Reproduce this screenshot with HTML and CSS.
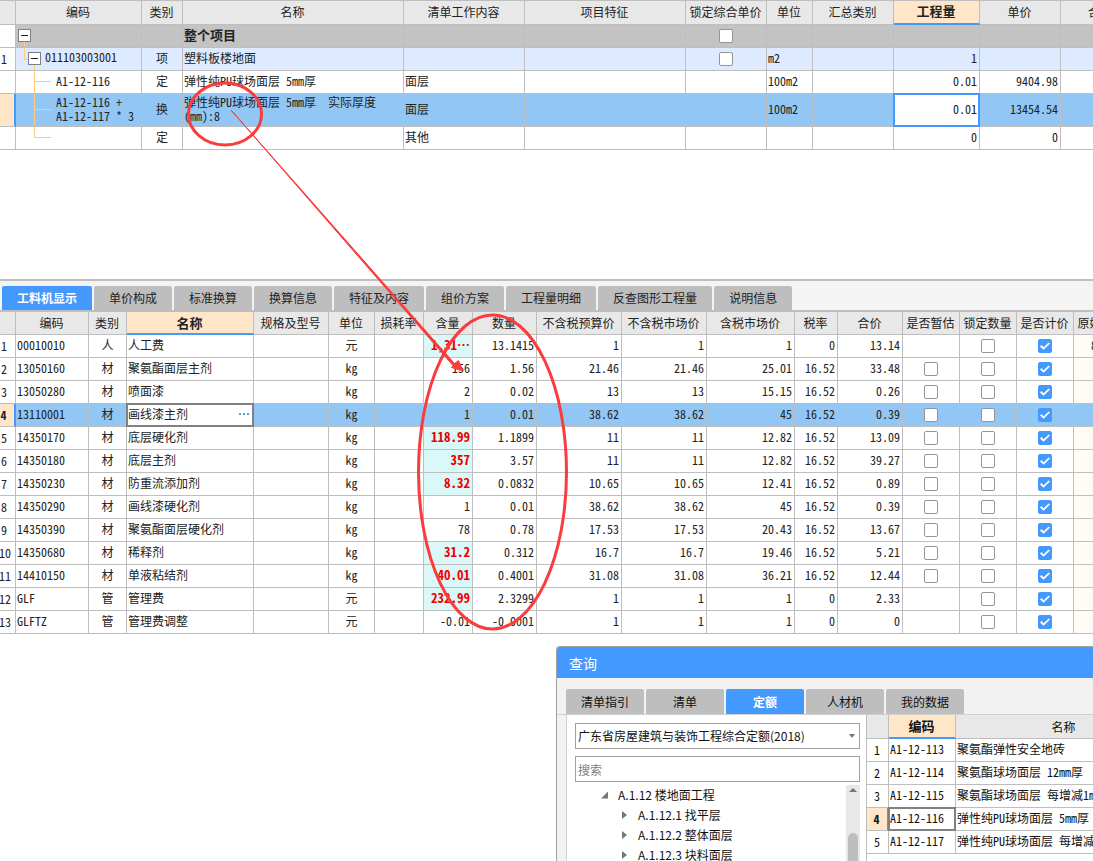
FILE: index.html
```html
<!DOCTYPE html>
<html lang="zh-CN">
<head>
<meta charset="utf-8">
<title>工料机显示</title>
<link rel="stylesheet" href="styles.css">
</head>
<body>
<main class="workspace">
  <section class="bill">
    <table class="grid bill-grid">
      <colgroup><col class="w16"><col class="w126"><col class="w41"><col class="w221"><col class="w121"><col class="w161"><col class="w81"><col class="w46"><col class="w81"><col class="w86"><col class="w81"><col></colgroup>
      <thead>
        <tr><th></th><th>编码</th><th>类别</th><th>名称</th><th>清单工作内容</th><th>项目特征</th><th>锁定综合单价</th><th>单位</th><th>汇总类别</th><th class="current">工程量</th><th>单价</th><th>合价</th></tr>
      </thead>
      <tbody>
        <tr class="group"><td class="no"></td><td class="tree root"><button class="toggle" aria-label="折叠"></button></td><td></td><td class="title">整个项目</td><td></td><td></td><td class="check"><input type="checkbox" aria-label="锁定综合单价"></td><td></td><td></td><td></td><td></td><td></td></tr>
        <tr class="item"><td class="no">1</td><td class="tree node"><button class="toggle" aria-label="折叠"></button>011103003001</td><td class="mid">项</td><td>塑料板楼地面</td><td></td><td></td><td class="check"><input type="checkbox" aria-label="锁定综合单价"></td><td>m2</td><td></td><td class="num">1</td><td></td><td></td></tr>
        <tr><td class="no"></td><td class="tree leaf">A1-12-116</td><td class="mid">定</td><td>弹性纯PU球场面层 5mm厚</td><td>面层</td><td></td><td></td><td>100m2</td><td></td><td class="num">0.01</td><td class="num">9404.98</td><td></td></tr>
        <tr class="selected tall"><td class="no"></td><td class="tree leaf">A1-12-116 +<br>A1-12-117 * 3</td><td class="mid">换</td><td>弹性纯PU球场面层 5mm厚&nbsp; 实际厚度<br>(mm):8</td><td>面层</td><td></td><td></td><td>100m2</td><td></td><td class="editing"><input class="field num" type="text" value="0.01" aria-label="工程量"></td><td class="num">13454.54</td><td></td></tr>
        <tr><td class="no"></td><td class="tree leaf last"></td><td class="mid">定</td><td></td><td>其他</td><td></td><td></td><td></td><td></td><td class="num">0</td><td class="num">0</td><td></td></tr>
      </tbody>
    </table>
  </section>

  <section class="detail">
    <nav class="tabs">
      <button class="tab active">工料机显示</button><button class="tab">单价构成</button><button class="tab">标准换算</button><button class="tab">换算信息</button><button class="tab">特征及内容</button><button class="tab">组价方案</button><button class="tab">工程量明细</button><button class="tab">反查图形工程量</button><button class="tab">说明信息</button>
    </nav>
    <table class="grid detail-grid">
      <colgroup><col class="w16"><col class="w73"><col class="w38"><col class="w127"><col class="w75"><col class="w46"><col class="w49"><col class="w49"><col class="w64"><col class="w85"><col class="w85"><col class="w88"><col class="w43"><col class="w65"><col class="w57"><col class="w57"><col class="w57"><col></colgroup>
      <thead>
        <tr><th></th><th>编码</th><th>类别</th><th class="current">名称</th><th>规格及型号</th><th>单位</th><th>损耗率</th><th>含量</th><th>数量</th><th>不含税预算价</th><th>不含税市场价</th><th>含税市场价</th><th>税率</th><th>合价</th><th>是否暂估</th><th>锁定数量</th><th>是否计价</th><th>原始含量</th></tr>
      </thead>
      <tbody>
        <tr><td class="no">1</td><td>00010010</td><td class="mid">人</td><td>人工费</td><td></td><td class="mid">元</td><td></td><td class="num changed">1,31⋯</td><td class="num">13.1415</td><td class="num">1</td><td class="num">1</td><td class="num">1</td><td class="num">0</td><td class="num">13.14</td><td></td><td class="check"><input type="checkbox" aria-label="锁定数量"></td><td class="check"><input type="checkbox" checked aria-label="是否计价"></td><td class="origin">8</td></tr>
        <tr><td class="no">2</td><td>13050160</td><td class="mid">材</td><td>聚氨酯面层主剂</td><td></td><td class="mid">kg</td><td></td><td class="num">156</td><td class="num">1.56</td><td class="num">21.46</td><td class="num">21.46</td><td class="num">25.01</td><td class="num">16.52</td><td class="num">33.48</td><td class="check"><input type="checkbox" aria-label="是否暂估"></td><td class="check"><input type="checkbox" aria-label="锁定数量"></td><td class="check"><input type="checkbox" checked aria-label="是否计价"></td><td class="origin"></td></tr>
        <tr><td class="no">3</td><td>13050280</td><td class="mid">材</td><td>喷面漆</td><td></td><td class="mid">kg</td><td></td><td class="num">2</td><td class="num">0.02</td><td class="num">13</td><td class="num">13</td><td class="num">15.15</td><td class="num">16.52</td><td class="num">0.26</td><td class="check"><input type="checkbox" aria-label="是否暂估"></td><td class="check"><input type="checkbox" aria-label="锁定数量"></td><td class="check"><input type="checkbox" checked aria-label="是否计价"></td><td class="origin"></td></tr>
        <tr class="selected"><td class="no">4</td><td>13110001</td><td class="mid">材</td><td class="picking"><div class="picker"><input class="field" type="text" value="画线漆主剂" aria-label="名称"><button class="more" aria-label="更多"><i></i><i></i><i></i></button></div></td><td></td><td class="mid">kg</td><td></td><td class="num">1</td><td class="num">0.01</td><td class="num">38.62</td><td class="num">38.62</td><td class="num">45</td><td class="num">16.52</td><td class="num">0.39</td><td class="check"><input type="checkbox" aria-label="是否暂估"></td><td class="check"><input type="checkbox" aria-label="锁定数量"></td><td class="check"><input type="checkbox" checked aria-label="是否计价"></td><td></td></tr>
        <tr><td class="no">5</td><td>14350170</td><td class="mid">材</td><td>底层硬化剂</td><td></td><td class="mid">kg</td><td></td><td class="num changed">118.99</td><td class="num">1.1899</td><td class="num">11</td><td class="num">11</td><td class="num">12.82</td><td class="num">16.52</td><td class="num">13.09</td><td class="check"><input type="checkbox" aria-label="是否暂估"></td><td class="check"><input type="checkbox" aria-label="锁定数量"></td><td class="check"><input type="checkbox" checked aria-label="是否计价"></td><td class="origin"></td></tr>
        <tr><td class="no">6</td><td>14350180</td><td class="mid">材</td><td>底层主剂</td><td></td><td class="mid">kg</td><td></td><td class="num changed">357</td><td class="num">3.57</td><td class="num">11</td><td class="num">11</td><td class="num">12.82</td><td class="num">16.52</td><td class="num">39.27</td><td class="check"><input type="checkbox" aria-label="是否暂估"></td><td class="check"><input type="checkbox" aria-label="锁定数量"></td><td class="check"><input type="checkbox" checked aria-label="是否计价"></td><td class="origin"></td></tr>
        <tr><td class="no">7</td><td>14350230</td><td class="mid">材</td><td>防重流添加剂</td><td></td><td class="mid">kg</td><td></td><td class="num changed">8.32</td><td class="num">0.0832</td><td class="num">10.65</td><td class="num">10.65</td><td class="num">12.41</td><td class="num">16.52</td><td class="num">0.89</td><td class="check"><input type="checkbox" aria-label="是否暂估"></td><td class="check"><input type="checkbox" aria-label="锁定数量"></td><td class="check"><input type="checkbox" checked aria-label="是否计价"></td><td class="origin"></td></tr>
        <tr><td class="no">8</td><td>14350290</td><td class="mid">材</td><td>画线漆硬化剂</td><td></td><td class="mid">kg</td><td></td><td class="num">1</td><td class="num">0.01</td><td class="num">38.62</td><td class="num">38.62</td><td class="num">45</td><td class="num">16.52</td><td class="num">0.39</td><td class="check"><input type="checkbox" aria-label="是否暂估"></td><td class="check"><input type="checkbox" aria-label="锁定数量"></td><td class="check"><input type="checkbox" checked aria-label="是否计价"></td><td class="origin"></td></tr>
        <tr><td class="no">9</td><td>14350390</td><td class="mid">材</td><td>聚氨酯面层硬化剂</td><td></td><td class="mid">kg</td><td></td><td class="num">78</td><td class="num">0.78</td><td class="num">17.53</td><td class="num">17.53</td><td class="num">20.43</td><td class="num">16.52</td><td class="num">13.67</td><td class="check"><input type="checkbox" aria-label="是否暂估"></td><td class="check"><input type="checkbox" aria-label="锁定数量"></td><td class="check"><input type="checkbox" checked aria-label="是否计价"></td><td class="origin"></td></tr>
        <tr><td class="no">10</td><td>14350680</td><td class="mid">材</td><td>稀释剂</td><td></td><td class="mid">kg</td><td></td><td class="num changed">31.2</td><td class="num">0.312</td><td class="num">16.7</td><td class="num">16.7</td><td class="num">19.46</td><td class="num">16.52</td><td class="num">5.21</td><td class="check"><input type="checkbox" aria-label="是否暂估"></td><td class="check"><input type="checkbox" aria-label="锁定数量"></td><td class="check"><input type="checkbox" checked aria-label="是否计价"></td><td class="origin"></td></tr>
        <tr><td class="no">11</td><td>14410150</td><td class="mid">材</td><td>单液粘结剂</td><td></td><td class="mid">kg</td><td></td><td class="num changed">40.01</td><td class="num">0.4001</td><td class="num">31.08</td><td class="num">31.08</td><td class="num">36.21</td><td class="num">16.52</td><td class="num">12.44</td><td class="check"><input type="checkbox" aria-label="是否暂估"></td><td class="check"><input type="checkbox" aria-label="锁定数量"></td><td class="check"><input type="checkbox" checked aria-label="是否计价"></td><td class="origin"></td></tr>
        <tr><td class="no">12</td><td>GLF</td><td class="mid">管</td><td>管理费</td><td></td><td class="mid">元</td><td></td><td class="num changed">232.99</td><td class="num">2.3299</td><td class="num">1</td><td class="num">1</td><td class="num">1</td><td class="num">0</td><td class="num">2.33</td><td></td><td class="check"><input type="checkbox" aria-label="锁定数量"></td><td class="check"><input type="checkbox" checked aria-label="是否计价"></td><td class="origin"></td></tr>
        <tr><td class="no">13</td><td>GLFTZ</td><td class="mid">管</td><td>管理费调整</td><td></td><td class="mid">元</td><td></td><td class="num">-0.01</td><td class="num">-0.0001</td><td class="num">1</td><td class="num">1</td><td class="num">1</td><td class="num">0</td><td class="num">0</td><td></td><td class="check"><input type="checkbox" aria-label="锁定数量"></td><td class="check"><input type="checkbox" checked aria-label="是否计价"></td><td class="origin"></td></tr>
      </tbody>
    </table>
  </section>

  <section class="dialog">
    <header class="dialog-title">查询</header>
    <nav class="tabs dialog-tabs">
      <button class="tab">清单指引</button><button class="tab">清单</button><button class="tab active">定额</button><button class="tab">人材机</button><button class="tab">我的数据</button>
    </nav>
    <div class="dialog-body">
      <div class="catalog">
        <div class="select-wrap"><select class="box" aria-label="定额库"><option>广东省房屋建筑与装饰工程综合定额(2018)</option></select></div>
        <input class="box" type="text" placeholder="搜索" aria-label="搜索">
        <div class="tree-pane">
          <ul class="chapters">
            <li class="chapter open">A.1.12 楼地面工程</li>
            <li class="chapter sub">A.1.12.1 找平层</li>
            <li class="chapter sub">A.1.12.2 整体面层</li>
            <li class="chapter sub">A.1.12.3 块料面层</li>
          </ul>
          <div class="scrollbar"><span class="arrow-up"></span><span class="thumb"></span></div>
        </div>
      </div>
      <div class="results">
        <table class="grid result-grid">
          <colgroup><col class="w22"><col class="w67"><col></colgroup>
          <thead><tr><th></th><th class="current">编码</th><th>名称</th></tr></thead>
          <tbody>
            <tr><td class="no">1</td><td>A1-12-113</td><td>聚氨酯弹性安全地砖</td></tr>
            <tr><td class="no">2</td><td>A1-12-114</td><td>聚氨酯球场面层 12mm厚</td></tr>
            <tr><td class="no">3</td><td>A1-12-115</td><td>聚氨酯球场面层 每增减1mm</td></tr>
            <tr class="chosen"><td class="no">4</td><td class="picking">A1-12-116</td><td>弹性纯PU球场面层 5mm厚</td></tr>
            <tr><td class="no">5</td><td>A1-12-117</td><td>弹性纯PU球场面层 每增减1mm</td></tr>
          </tbody>
        </table>
      </div>
    </div>
  </section>

  <svg class="marks" width="600" height="640" viewBox="0 0 600 640" aria-hidden="true">
    <ellipse cx="225" cy="114" rx="36.500" ry="31"/>
    <ellipse cx="492.500" cy="472" rx="74" ry="157"/>
    <path d="M231 110 L454.500 363.500 L458.500 360.500 L463 371 L451.500 367.500 L453 365.500 Z"/>
  </svg>
</main>
</body>
</html>
```
FILE: styles.css
```css
* { box-sizing: border-box; }

body {
  margin: 0;
  background: #fff;
  color: #222;
  font-family: "Noto Sans Mono CJK SC", "Noto Sans CJK SC", sans-serif;
  font-size: 12px;
  line-height: 14px;
}

button, input, select { font: inherit; color: inherit; margin: 0; padding: 0; }

.workspace {
  position: relative;
  min-height: 100vh;
  overflow: hidden;
}

.bill {
  border-top: 1px solid #bebebe;
  padding-bottom: 129px;
}

/* Grids */
.grid {
  table-layout: fixed;
  width: 100%;
  border-collapse: separate;
  border-spacing: 0;
}
.bill-grid { min-width: 1141px; }
.detail-grid { min-width: 1131px; }
.result-grid { min-width: 306px; }

.w16 { width: 16px; }
.w22 { width: 22px; }
.w38 { width: 38px; }
.w41 { width: 41px; }
.w43 { width: 43px; }
.w46 { width: 46px; }
.w49 { width: 49px; }
.w57 { width: 57px; }
.w64 { width: 64px; }
.w65 { width: 65px; }
.w67 { width: 67px; }
.w73 { width: 73px; }
.w75 { width: 75px; }
.w81 { width: 81px; }
.w85 { width: 85px; }
.w86 { width: 86px; }
.w88 { width: 88px; }
.w121 { width: 121px; }
.w126 { width: 126px; }
.w127 { width: 127px; }
.w161 { width: 161px; }
.w221 { width: 221px; }

.grid th, .grid td {
  height: 23px;
  padding: 0 2px 2px 1px;
  border-right: 1px solid #bebebe;
  border-bottom: 1px solid #bebebe;
  text-align: left;
  vertical-align: middle;
  white-space: nowrap;
  overflow: hidden;
}
.grid th {
  padding: 0 1px 0 0;
  background: #e8e8e8;
  font-weight: 400;
  text-align: center;
}
.bill-grid th { height: 24px; padding-bottom: 2px; }
.grid th.current {
  background: #ffe6c8;
  border-bottom: 2px solid #4499ff;
  font-size: 13px;
  font-weight: 700;
}
.grid .mid { text-align: center; padding-left: 2px; }
.grid .check { padding: 0; }
.grid .num { text-align: right; }
.grid .no { text-align: center; padding: 0 6px 0 0; overflow: visible; }
.grid .no:not(:empty) { text-indent: -1px; }
.result-grid .no { padding: 0; }
.grid .title { font-size: 13px; font-weight: 700; }
.grid .changed { background: #daf8f8; color: #f00000; font-size: 13px; font-weight: 700; }
.grid .origin { background: #fffbf5; padding-left: 17px; }

.group td { background-color: #c3c3c3; }
.item td { background-color: #ddeaff; }
.selected td { background-color: #92c7f5; }
.group .no, .item .no { background-color: #fff; }
.selected .no, .chosen .no {
  background-color: #ffe6c8;
  border-right: 2px solid #4499ff;
  font-weight: 700;
}
.tall td { height: 33px; }

/* Hierarchy guides in the code column */
.tree { background-repeat: no-repeat; }
.toggle {
  position: relative;
  display: inline-block;
  width: 13px;
  height: 13px;
  margin-bottom: 1px;
  border: 1px solid #808080;
  background: #fff;
  vertical-align: middle;
}
.toggle::before {
  content: "";
  position: absolute;
  left: 2px;
  top: 5px;
  width: 7px;
  height: 1px;
  background: #222;
}
.grid .root {
  padding-left: 2px;
  background-image: linear-gradient(#ffcb7d, #ffcb7d);
  background-size: 1px 50%;
  background-position: 8px 100%;
}
.grid .node {
  padding-left: 12px;
  background-image: linear-gradient(#ffcb7d, #ffcb7d), linear-gradient(#ffcb7d, #ffcb7d), linear-gradient(#ffcb7d, #ffcb7d);
  background-size: 1px 50%, 4px 1px, 1px 50%;
  background-position: 8px 0, 8px 50%, 18px 100%;
}
.node .toggle { margin-right: 4px; }
.grid .leaf {
  padding-left: 40px;
  background-image: linear-gradient(#ffcb7d, #ffcb7d), linear-gradient(#ffcb7d, #ffcb7d);
  background-size: 1px 100%, 17px 1px;
  background-position: 18px 0, 18px calc(50% - 1px);
}
.grid .last { background-size: 1px 50%, 17px 1px; }

/* Cells in edit state: the frame covers the neighbouring grid lines */
.grid .editing, .grid .picking {
  position: relative;
  overflow: visible;
}
.selected td.editing, td.picking { background-color: #fff; }
.editing::after, .picking::after {
  content: "";
  position: absolute;
  inset: -1px;
  border: 2px solid #808080;
  pointer-events: none;
}
.editing::after { border-color: #4499ff; }
.field {
  width: 100%;
  border: 0;
  outline: 0;
  background: transparent;
}
.picker { display: flex; align-items: center; }
.picker .field { flex: 1; min-width: 0; }
.more {
  display: flex;
  gap: 2px;
  padding: 4px 2px;
  border: 0;
  background: none;
}
.more i { width: 2px; height: 2px; background: #5aa0d0; }

input[type="checkbox"] {
  appearance: none;
  display: block;
  position: relative;
  width: 14px;
  height: 14px;
  margin: 0 auto;
  border: 1px solid #969696;
  border-radius: 2px;
  background: #fff;
}
input[type="checkbox"]:checked { border-color: #4499ff; background: #4499ff; }
input[type="checkbox"]:checked::before {
  content: "";
  position: absolute;
  inset: 1px;
  background: #fff;
  clip-path: polygon(0 54%, 14% 40%, 36% 62%, 86% 14%, 100% 26%, 36% 88%);
}

/* Tab strips */
.detail {
  border-top: 2px solid #bebebe;
  background: #f4f4f4;
}
.detail-grid td { background-color: #fff; }
.detail-grid .changed { background-color: #daf8f8; }
.detail-grid .origin { background-color: #fffbf5; }
.detail-grid .selected td { background-color: #92c7f5; }
.detail-grid .selected .no { background-color: #ffe6c8; }
.detail-grid .selected td.picking { background-color: #fff; }

.tabs {
  display: flex;
  gap: 2px;
  padding: 5px 2px 0;
  border-bottom: 2px solid #bebebe;
  font-family: "Noto Sans CJK SC", sans-serif;
}
.tab {
  height: 24px;
  min-width: 78px;
  padding: 0 15px;
  border: 0;
  border-radius: 2px 2px 0 0;
  background: #bebebe;
  white-space: nowrap;
}
.tab.active { background: #4499ff; color: #fff; font-weight: 700; }

/* Query window floating above the grids */
.dialog {
  position: absolute;
  left: 556px;
  right: 0;
  top: 646px;
  bottom: 0;
  display: flex;
  flex-direction: column;
  overflow: hidden;
  border: 1px solid #a0a0a0;
  border-width: 1px 0 0 1px;
  border-radius: 4px 0 0 0;
  background: #f2f2f2;
  color: #111;
  font-family: "Noto Sans CJK SC", sans-serif;
}
.dialog-title {
  padding: 9px 12px 8px;
  background: #4499ff;
  color: #fff;
  font-size: 14px;
}
.dialog-tabs {
  padding: 11px 9px 0;
  border-bottom: 1px solid #d0d0d0;
}
.dialog-tabs .tab { height: 25px; }
.dialog-body {
  flex: 1;
  display: flex;
  min-height: 0;
  margin-left: 9px;
  border-left: 1px solid #d0d0d0;
  background: #fff;
}
.catalog {
  flex: 0 0 299px;
  display: flex;
  flex-direction: column;
  gap: 7px;
  padding: 8px 6px 0 8px;
}
.box {
  display: block;
  flex: none;
  width: 100%;
  height: 26px;
  padding: 0 2px;
  border: 1px solid #a0a0a0;
  border-radius: 0;
  background: #fff;
  appearance: none;
}
.box::placeholder { color: #808080; }
.select-wrap { position: relative; }
.select-wrap::after {
  content: "";
  position: absolute;
  right: 5px;
  top: 11px;
  border: 3px solid transparent;
  border-top: 4px solid #777;
  border-bottom: 0;
}
.tree-pane { display: flex; min-height: 0; flex: 1; margin-top: -4px; }
.chapters { flex: 1; margin: 0; padding: 0 0 0 26px; list-style: none; }
.chapter {
  display: flex;
  align-items: center;
  gap: 8px;
  height: 20px;
  white-space: nowrap;
}
.chapter::before { content: ""; width: 9px; }
.chapter.open::before {
  width: 7px;
  height: 7px;
  margin-right: 2px;
  background: #777;
  clip-path: polygon(100% 0, 100% 100%, 0 100%);
}
.chapter.sub { padding-left: 21px; gap: 11px; }
.chapter.sub::before {
  width: 5px;
  height: 8px;
  background: #777;
  clip-path: polygon(0 0, 100% 50%, 0 100%);
}
.scrollbar {
  display: flex;
  flex-direction: column;
  align-items: center;
  gap: 41px;
  width: 14px;
  padding-top: 3px;
  background: #e8e8e8;
}
.arrow-up {
  border: 4px solid transparent;
  border-top: 0;
  border-bottom: 4px solid #777;
}
.thumb {
  flex: 1;
  width: 10px;
  border-radius: 5px 5px 0 0;
  background: #bebebe;
}
.results {
  flex: 1;
  min-width: 0;
  overflow: hidden;
  border-left: 1px solid #bebebe;
  font-family: "Noto Sans Mono CJK SC", "Noto Sans CJK SC", sans-serif;
}
.result-grid th { height: 24px; }

/* Hand-drawn highlights */
.marks {
  position: absolute;
  left: 0;
  top: 0;
  pointer-events: none;
}
.marks ellipse { fill: none; stroke: #fa3c3c; stroke-width: 3; }
.marks path { fill: #fa3c3c; stroke: #fa3c3c; stroke-width: 1; }
```
